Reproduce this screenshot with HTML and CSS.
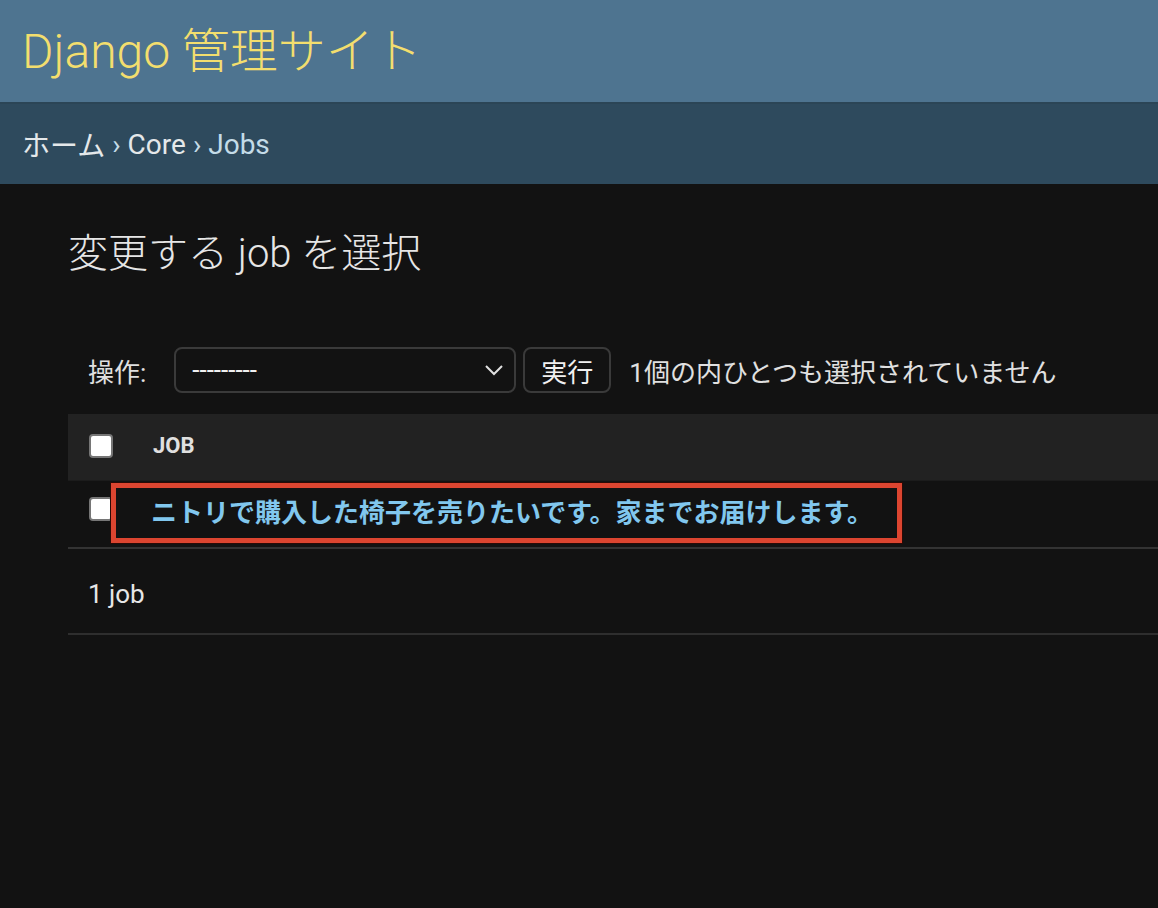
FILE: index.html
```html
<!doctype html>
<html lang="ja">
    <head>
        <title>変更する job を選択 | Django サイト管理</title>
        <link rel="stylesheet" href="styles.css">
    </head>
    <body>
        <div id="header">
            <div class="branding">Django 管理サイト</div>
        </div>
        <div class="breadcrumbs">
            <a href="#">ホーム</a> › <a href="#">Core</a> › Jobs
        </div>

        <div id="content">
            <h1>変更する job を選択</h1>

            <div class="actions">
                <label>操作:</label>
                <div class="select">
                    <span>---------</span>
                    <svg class="chevron" width="20" height="12" viewBox="0 0 20 12"><path d="M2 2 L10 10 L18 2" fill="none" stroke="#e0e0e0" stroke-width="2"/></svg>
                </div>
                <button type="button" class="button">実行</button>
                <span class="counter">1個の内ひとつも選択されていません</span>
            </div>

            <table class="results">
                <thead>
                    <tr>
                        <th class="check"><span class="box"></span></th>
                        <th class="col">JOB</th>
                    </tr>
                </thead>
                <tbody>
                    <tr>
                        <td class="check"><span class="box"></span></td>
                        <th class="col"><a href="#">ニトリで購入した椅子を売りたいです。家までお届けします。</a></th>
                    </tr>
                </tbody>
            </table>

            <p class="paginator">1 job</p>
        </div>

        <!-- annotation drawn over the first row -->
        <div class="mark"></div>
    </body>
</html>
```

FILE: styles.css
```css
html, body {
  margin: 0;
  padding: 0;
}

body {
  position: relative;
  min-height: 908px;
  background-color: #121212;
  color: #e0e0e0;
  font-family: Roboto, "Noto Sans CJK JP", sans-serif;
  font-size: 26px;
}

a {
  text-decoration: none;
}

#header {
  height: 102px;
  padding: 0 22px;
  display: flex;
  align-items: center;
  background-color: #4e7490;
}

#header .branding {
  color: #f3de6e;
  font-size: 48px;
  font-weight: 300;
  margin-top: -8px;
}

.breadcrumbs {
  height: 82px;
  padding: 0 22px;
  display: flex;
  align-items: center;
  gap: 0.25em;
  box-sizing: border-box;
  border-top: 2px solid #2b4556;
  background-color: #2e4a5d;
  color: #c4dce8;
  font-size: 28px;
}

.breadcrumbs a {
  color: #e4e8ea;
}

#content {
  padding: 0 0 0 68px;
}

h1 {
  margin: 0;
  padding: 50px 0 0;
  height: 90px;
  box-sizing: border-box;
  font-size: 40px;
  font-weight: 300;
  color: #e6e6e6;
  line-height: 40px;
}

.actions {
  display: flex;
  align-items: center;
  height: 46px;
  margin-top: 73px;
  padding-left: 20px;
  margin-bottom: 21px;
}

.actions label {
  margin-right: 28px;
  color: #e0e0e0;
}

.select {
  width: 342px;
  height: 46px;
  box-sizing: border-box;
  display: flex;
  align-items: center;
  justify-content: space-between;
  padding: 0 10px 0 16px;
  border: 2px solid #3a3a3a;
  border-radius: 8px;
  color: #f0f0f0;
}

.button {
  height: 46px;
  width: 88px;
  margin-left: 7px;
  box-sizing: border-box;
  border: 2px solid #3a3a3a;
  border-radius: 8px;
  background: #121212;
  color: #f0f0f0;
  font-family: inherit;
  font-size: 26px;
  padding: 0;
}

.counter {
  margin-left: 18px;
  color: #e0e0e0;
}

table.results {
  width: 100%;
  border-collapse: collapse;
}

table.results thead th {
  height: 63px;
  padding-bottom: 3px;
  background-color: #222;
  color: #e0e0e0;
  font-size: 22px;
  font-weight: bold;
  text-align: left;
}

table.results td,
table.results tbody th {
  height: 56px;
  padding-bottom: 8px;
  border-top: 1px solid #1c1c1c;
  border-bottom: 2px solid #333;
  text-align: left;
}

table.results td.check {
  padding-bottom: 10px;
}

.check {
  width: 44px;
  padding: 0 0 0 21px;
}

.col {
  padding: 0 0 0 20px;
}

.box {
  display: block;
  width: 24px;
  height: 24px;
  box-sizing: border-box;
  background: #fff;
  border: 2px solid #767676;
  border-radius: 4px;
}

table.results tbody a {
  color: #81c7ee;
  font-size: 26px;
  font-weight: bold;
  margin-left: -2px;
}

.paginator {
  margin: 0;
  height: 86px;
  box-sizing: border-box;
  padding: 5px 0 0 20px;
  display: flex;
  align-items: center;
  border-bottom: 2px solid #2e2e2e;
  color: #e6e6e6;
}

.mark {
  position: absolute;
  left: 111px;
  top: 483px;
  width: 791px;
  height: 60px;
  box-sizing: border-box;
  border: 5px solid #dc4530;
  box-shadow: 0 0 0 1px #2a0a06;
}
```
